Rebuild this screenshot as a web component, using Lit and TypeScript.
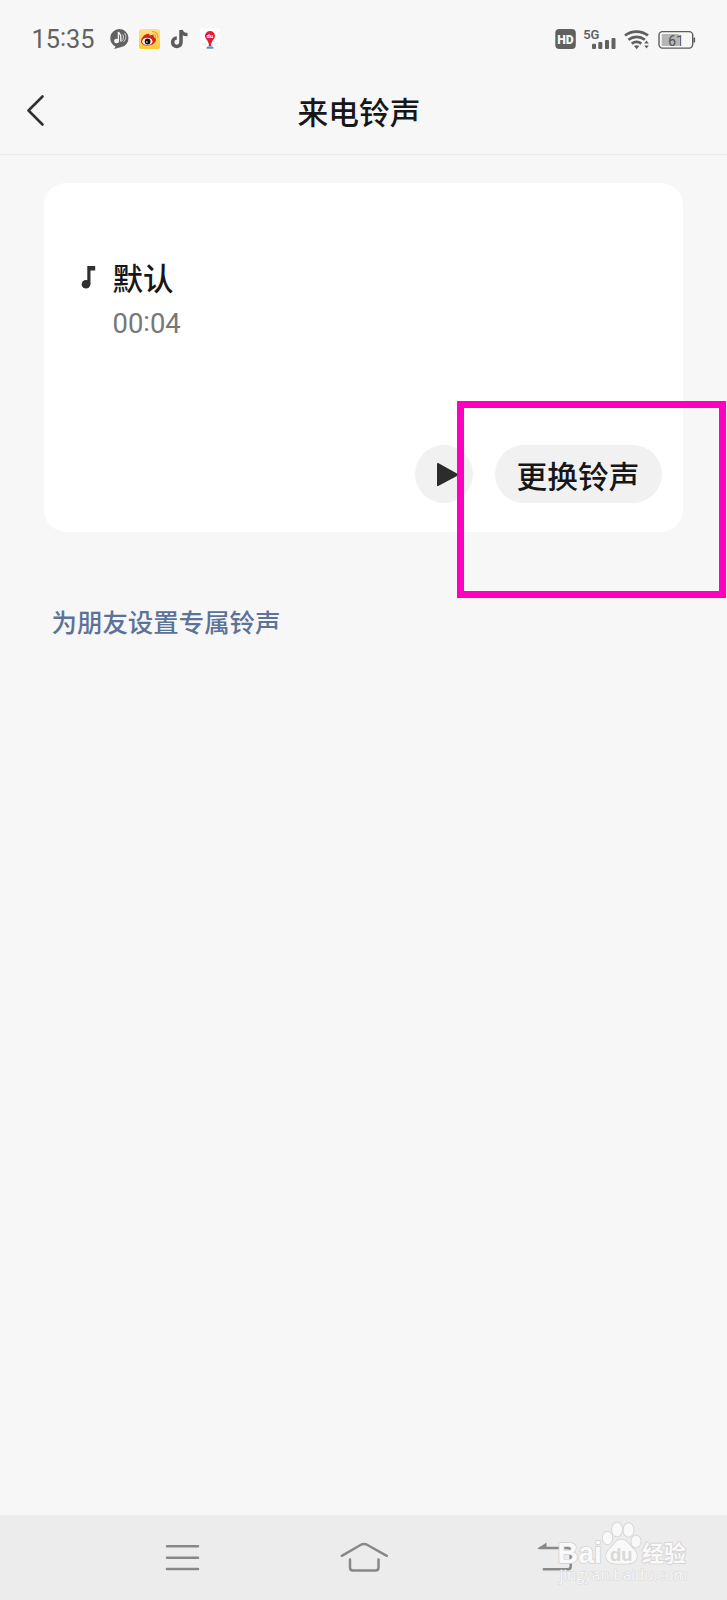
import { LitElement, html, css } from "lit";
import { customElement } from "lit/decorators.js";

@customElement("status-bar")
class StatusBar extends LitElement {
  static styles = css`
    :host { display: flex; height: 78px; box-sizing: border-box; color: #626262; font-family: Roboto, "Noto Sans", sans-serif; }
    .time { margin: 25px 0 0 31.500px; width: 77.500px; font-size: 25.300px; line-height: 30px; }
    .colon { display: inline-block; transform: translateY(-2px); }
    svg { display: block; }
    .left { width: 112px; height: 78px; }
    .right { margin-left: auto; width: 197px; height: 78px; }
  `;
  render() {
    return html`
      <div class="time">15<span class="colon">:</span>35</div>
      <svg class="left" viewBox="109 0 112 78">
        <path d="M119 29a9.2 9.2 0 0 1 1.6 18.3L114 49l1.600-2.300A9.300 9.300 0 0 1 119 29z" fill="#626262"/>
        <ellipse cx="116.600" cy="41" rx="2.500" ry="2.300" fill="#f6f6f6"/>
        <path d="M118.400 41V32c.8 1.600 2.400 2.200 2.400 4.400v5" fill="none" stroke="#f6f6f6" stroke-width="1.300"/>
        <path d="M122.600 34.300c1.400 2.200 1 5-.9 7M124.700 33c1.900 3 1.100 6.500-1.100 8.800" fill="none" stroke="#e4e4e4" stroke-width=".9"/>
        <defs><linearGradient id="g" x1="0" y1="0" x2="0" y2="1"><stop offset="0" stop-color="#fddf8e"/><stop offset="1" stop-color="#fbca2c"/></linearGradient></defs>
        <rect x="139" y="29" width="21" height="20" rx="2.500" fill="url(#g)"/>
        <path d="M141 41c.2-3.700 4.500-7.500 7.500-7.300 1.200.1 1.300 1 .9 2 2.200-1 5-.9 4.400 1.600 3.700 1 2.300 5.300-1.300 7.100-4.500 2.200-11.700 1.200-11.500-3.400z" fill="#d51f1c"/>
        <ellipse cx="147.300" cy="41.400" rx="5.200" ry="3.600" fill="#fff"/>
        <circle cx="147.600" cy="41.500" r="2.900" fill="#111"/><circle cx="146.900" cy="42" r=".8" fill="#fff"/>
        <path d="M152.500 34.500c2-.4 3.500 1.200 2.800 3.200M151.800 31.700c4-.7 6.800 2.400 5.700 6.200" fill="none" stroke="#f3a23a" stroke-width="1.200"/>
        <path d="M181 30v12.300a4.200 4.200 0 1 1-4.200-4.200M181 30c.5 3.300 3 4.600 6.500 4.600" fill="none" stroke="#5c5c5c" stroke-width="3.500"/>
        <rect x="200" y="28.500" width="20" height="20" rx="1" fill="#fff"/>
        <path d="M202 43.500l5 .8-5 1.500M218 43l-4 1.500 4 2" stroke="#e3ede7" fill="none"/>
        <path d="M208 45.500h4l1.500 2.500h-7z" fill="#94b8dc"/><path d="M206.500 48h7" stroke="#345f98" stroke-width="1"/>
        <path d="M210 31a4.900 4.900 0 0 1 5 4.900c0 2.800-3.800 4.300-4.100 10h-1.800c-.3-5.700-4.100-7.200-4.100-10A4.900 4.900 0 0 1 210 31z" fill="#e11e35"/>
        <text x="206.800" y="38" font-size="5.500" font-weight="700" fill="#fff">du</text>
      </svg>
      <svg class="right" viewBox="530 0 197 78">
        <rect x="555.300" y="29" width="20.500" height="20" rx="4" fill="#606060"/>
        <text x="557.300" y="43.600" font-size="12.500" font-weight="900" fill="#f7f7f7" textLength="16.400" lengthAdjust="spacingAndGlyphs">HD</text>
        <text x="583.200" y="38.800" font-size="13.300" font-weight="600" fill="#626262" textLength="16.300" lengthAdjust="spacingAndGlyphs">5G</text>
        <g fill="#626262"><rect x="592" y="43.800" width="4" height="5.200" rx="1"/><rect x="598.300" y="42" width="4" height="7" rx="1"/><rect x="605" y="40" width="4" height="9" rx="1"/><rect x="611.500" y="38" width="4" height="11" rx="1"/></g>
        <g fill="none" stroke="#5f5f5f" stroke-width="2.700"><path d="M625 35.500c6.500-5.300 16.500-5.300 23 0M628.400 39.800c5-4 11.500-4 16.500-.1M631.800 43.700c3-2.200 6.600-2.200 9.500 0"/></g>
        <path d="M634 46c1.500-1 4-1 5.300 0l-2.700 3.200z" fill="#5f5f5f"/>
        <path d="M646.500 40.400l2.300 3.200h-4.600zM644.200 45.400h4.600l-2.300 3.200z" fill="#5f5f5f"/>
        <rect x="659" y="31.600" width="33.700" height="16.500" rx="3.500" fill="none" stroke="#5c5c5c" stroke-width="1.400"/>
        <rect x="661.800" y="34" width="17.300" height="12" rx="1" fill="#b5b5b5"/>
        <rect x="693.500" y="37.500" width="1.600" height="5" fill="#5c5c5c"/>
        <text x="668.300" y="45.800" font-size="14.800" fill="#505050" textLength="15.500" lengthAdjust="spacingAndGlyphs">61</text>
      </svg>`;
  }
}

@customElement("nav-bar")
class NavBar extends LitElement {
  static styles = css`
    :host { display: block; position: relative; height: 85px; background: #ececec; }
    .icons { display: flex; align-items: center; height: 85px; padding-left: 165px; }
    .menu { width: 35px; height: 85px; margin-right: 139px; }
    .home { width: 50px; height: 85px; margin-right: 146px; }
    .back { width: 40px; height: 85px; }
    .stroke { fill: none; stroke: #888; stroke-width: 2.500; stroke-linecap: round; stroke-linejoin: round; }
    .mark { position: absolute; right: 30px; top: 0; width: 147px; height: 85px; }
    .white { fill: #f9f9f9; stroke: #d2d2d2; stroke-width: 1.600; paint-order: stroke; stroke-linejoin: round; }
    .url { fill: #f7f7f7; stroke: #dadada; stroke-width: 1.200; paint-order: stroke; }
  `;
  render() {
    return html`
      <div class="icons">
        <svg class="menu" viewBox="165 1515 35 85"><path class="stroke" d="M167 1546.300h31M167 1557.700h31M167 1569h31"/></svg>
        <svg class="home" viewBox="339 1515 50 85"><path class="stroke" d="M341.800 1555.800L360.500 1545q3.500-2 7 0l19.300 10.800M350 1559.500v8q0 3 3 3h22.500q3 0 3-3v-8"/></svg>
        <svg class="back" viewBox="535 1515 40 85"><path class="stroke" d="M543.800 1569.200H568q2.700 0 2.700-2.700v-15.800q0-2.700-2.700-2.700H540"/><path d="M537 1548.900l9.500-6.300v6.300z" fill="#888"/></svg>
      </div>
      <svg class="mark" viewBox="550 1515 147 85">
        <g class="white">
          <text x="557.500" y="1562.500" font-family="Liberation Sans" font-weight="700" font-size="29" textLength="44.500" lengthAdjust="spacingAndGlyphs">Bai</text>
          <ellipse cx="607.500" cy="1538" rx="4.800" ry="6.200"/><ellipse cx="617" cy="1529.500" rx="5" ry="7"/><ellipse cx="628.500" cy="1530" rx="5" ry="6.700"/><ellipse cx="636" cy="1541.500" rx="4.600" ry="6"/>
          <path d="M621.500 1539.500c5 0 7 4.500 10 7.500 4 4 6.500 7 4.800 11.500-1.700 4.700-5.500 5.300-14.800 5.300s-13-.6-14.800-5.300c-1.700-4.500.8-7.500 4.800-11.500 3-3 5-7.500 10-7.500z"/>
        </g>
        <text x="610" y="1560.500" font-family="Liberation Sans" font-weight="700" font-size="18.500" fill="#d8d8d8" textLength="22.500" lengthAdjust="spacingAndGlyphs">du</text>
        <text class="white" x="642" y="1560.500" font-family="Noto Sans CJK SC" font-weight="700" font-size="22" textLength="44" lengthAdjust="spacingAndGlyphs">经验</text>
        <text class="url" x="559.500" y="1580" font-family="Open Sans, sans-serif" font-size="15" textLength="128" lengthAdjust="spacingAndGlyphs">jingyan.baidu.com</text>
      </svg>`;
  }
}

@customElement("app-root")
class AppRoot extends LitElement {
  static styles = css`
    :host { display: flex; flex-direction: column; position: relative; width: 727px; height: 1600px; overflow: hidden; background: #f7f7f7; color: #171717; font-family: "Noto Sans CJK SC", sans-serif; }
    * { box-sizing: border-box; }
    header { display: grid; grid-template-columns: 60px 1fr 60px; align-items: center; height: 77px; border-bottom: 1px solid #ececec; }
    .arrow { width: 60px; height: 76px; }
    h1 { margin: 0 0 11px; padding-right: 9px; text-align: center; font-size: 30.700px; line-height: 40px; font-weight: 500; }
    .card { display: flex; flex-direction: column; margin: 28px 44px 0 44px; width: 639px; height: 349px; padding: 74px 21px 29px 36px; border-radius: 22px; background: #fff; }
    .song { display: flex; align-items: center; height: 40px; font-size: 30.500px; line-height: 40px; font-weight: 500; }
    .note { width: 32.500px; height: 40px; }
    .length { margin: 11px 0 0 32.500px; font: 27.400px/32px Roboto, sans-serif; color: #777; }
    .colon { display: inline-block; transform: translateY(-2px); }
    .actions { display: flex; justify-content: flex-end; gap: 22px; margin-top: auto; }
    .play { display: block; width: 58px; height: 58px; border-radius: 50%; background: #f1f1f1; }
    .change { width: 167px; height: 58px; border: 0; border-radius: 29px; padding: 1px 1px 0 0; background: #f1f1f1; color: #171717; font: 500 30.700px/57px "Noto Sans CJK SC", sans-serif; text-align: center; }
    .link { margin: 70px 0 0 51.500px; font-size: 25.450px; line-height: 38px; font-weight: 500; color: #5c7299; }
    .highlight { position: absolute; left: 457px; top: 401px; width: 269px; height: 197px; border: 7px solid #ff00c3; }
    nav-bar { margin-top: auto; }
  `;
  render() {
    return html`
      <status-bar></status-bar>
      <header>
        <svg class="arrow" viewBox="0 78 60 76"><path d="M42.500 96.500L28.500 110.500 42.500 124.500" fill="none" stroke="#303030" stroke-width="2.600" stroke-linecap="round" stroke-linejoin="round"/></svg>
        <h1>来电铃声</h1>
      </header>
      <section class="card">
        <div class="song">
          <svg class="note" viewBox="80 258 32.500 40"><circle cx="86" cy="285.300" r="4.300" fill="#303030"/><path d="M87.300 267h7.900v4.600h-4.700v13.700h-3.200z" fill="#303030"/></svg>
          <span>默认</span>
        </div>
        <div class="length">00<span class="colon">:</span>04</div>
        <div class="actions">
          <svg class="play" viewBox="415 445 58 58"><path d="M437.800 463.800L457.500 474.700 437.800 485.400z" fill="#2c2c2c" stroke="#2c2c2c" stroke-width="1.600" stroke-linejoin="round"/></svg>
          <button class="change">更换铃声</button>
        </div>
      </section>
      <div class="link">为朋友设置专属铃声</div>
      <div class="highlight"></div>
      <nav-bar></nav-bar>`;
  }
}
